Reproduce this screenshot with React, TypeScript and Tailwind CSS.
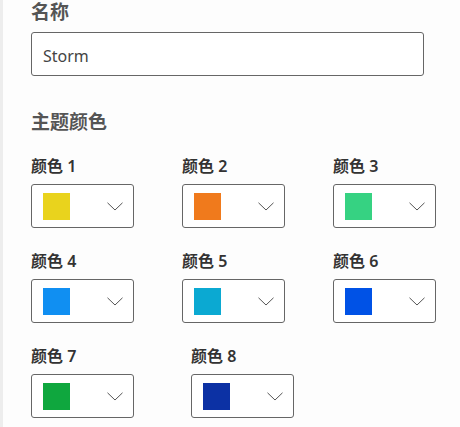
import React from 'react';

const font = { fontFamily: '"Noto Sans", "Noto Sans CJK SC", sans-serif' };

const Chevron: React.FC = () => (
  <svg width="16" height="9" viewBox="0 0 16 9" fill="none">
    <path d="M0.5 0.8 L8 8 L15.5 0.8" stroke="#555" strokeWidth="1" />
  </svg>
);

const ColorPicker: React.FC<{ label: string; color: string }> = ({ label, color }) => (
  <div className="flex w-[103px] flex-col">
    <div className="h-[22px] text-[16px] leading-[22px] font-semibold text-[#333]">{label}</div>
    <div className="mt-[7px] flex h-[44px] items-center justify-between rounded-[3px] border border-[#666] bg-white pl-[11px] pr-[10px]">
      <div className="h-[27px] w-[27px]" style={{ backgroundColor: color }} />
      <Chevron />
    </div>
  </div>
);

export default function App() {
  return (
    <div className="h-[427px] w-[460px] overflow-hidden border-l-[3px] border-[#ededed] bg-[#fdfdfd] pl-[28px]" style={font}>
      <div className="h-[24px] text-[19px] leading-[24px] font-bold text-[#555]">名称</div>
      <div className="mt-[8px] flex h-[44px] w-[393px] items-center rounded-[3px] border border-[#666] bg-white px-[11px] pt-[3px] text-[16px] text-[#444]">
        Storm
      </div>
      <div className="mt-[34px] h-[24px] text-[19px] leading-[24px] font-bold text-[#555]">主题颜色</div>
      <div className="mt-[21px] flex flex-col gap-[22px]">
        <div className="flex gap-[48px]">
          <ColorPicker label="颜色 1" color="#e9d31d" />
          <ColorPicker label="颜色 2" color="#f07a1c" />
          <ColorPicker label="颜色 3" color="#36d282" />
        </div>
        <div className="flex gap-[48px]">
          <ColorPicker label="颜色 4" color="#108ff2" />
          <ColorPicker label="颜色 5" color="#0ba9d2" />
          <ColorPicker label="颜色 6" color="#0052e6" />
        </div>
        <div className="flex gap-[57px]">
          <ColorPicker label="颜色 7" color="#0fa73e" />
          <ColorPicker label="颜色 8" color="#0c31a4" />
        </div>
      </div>
    </div>
  );
}
